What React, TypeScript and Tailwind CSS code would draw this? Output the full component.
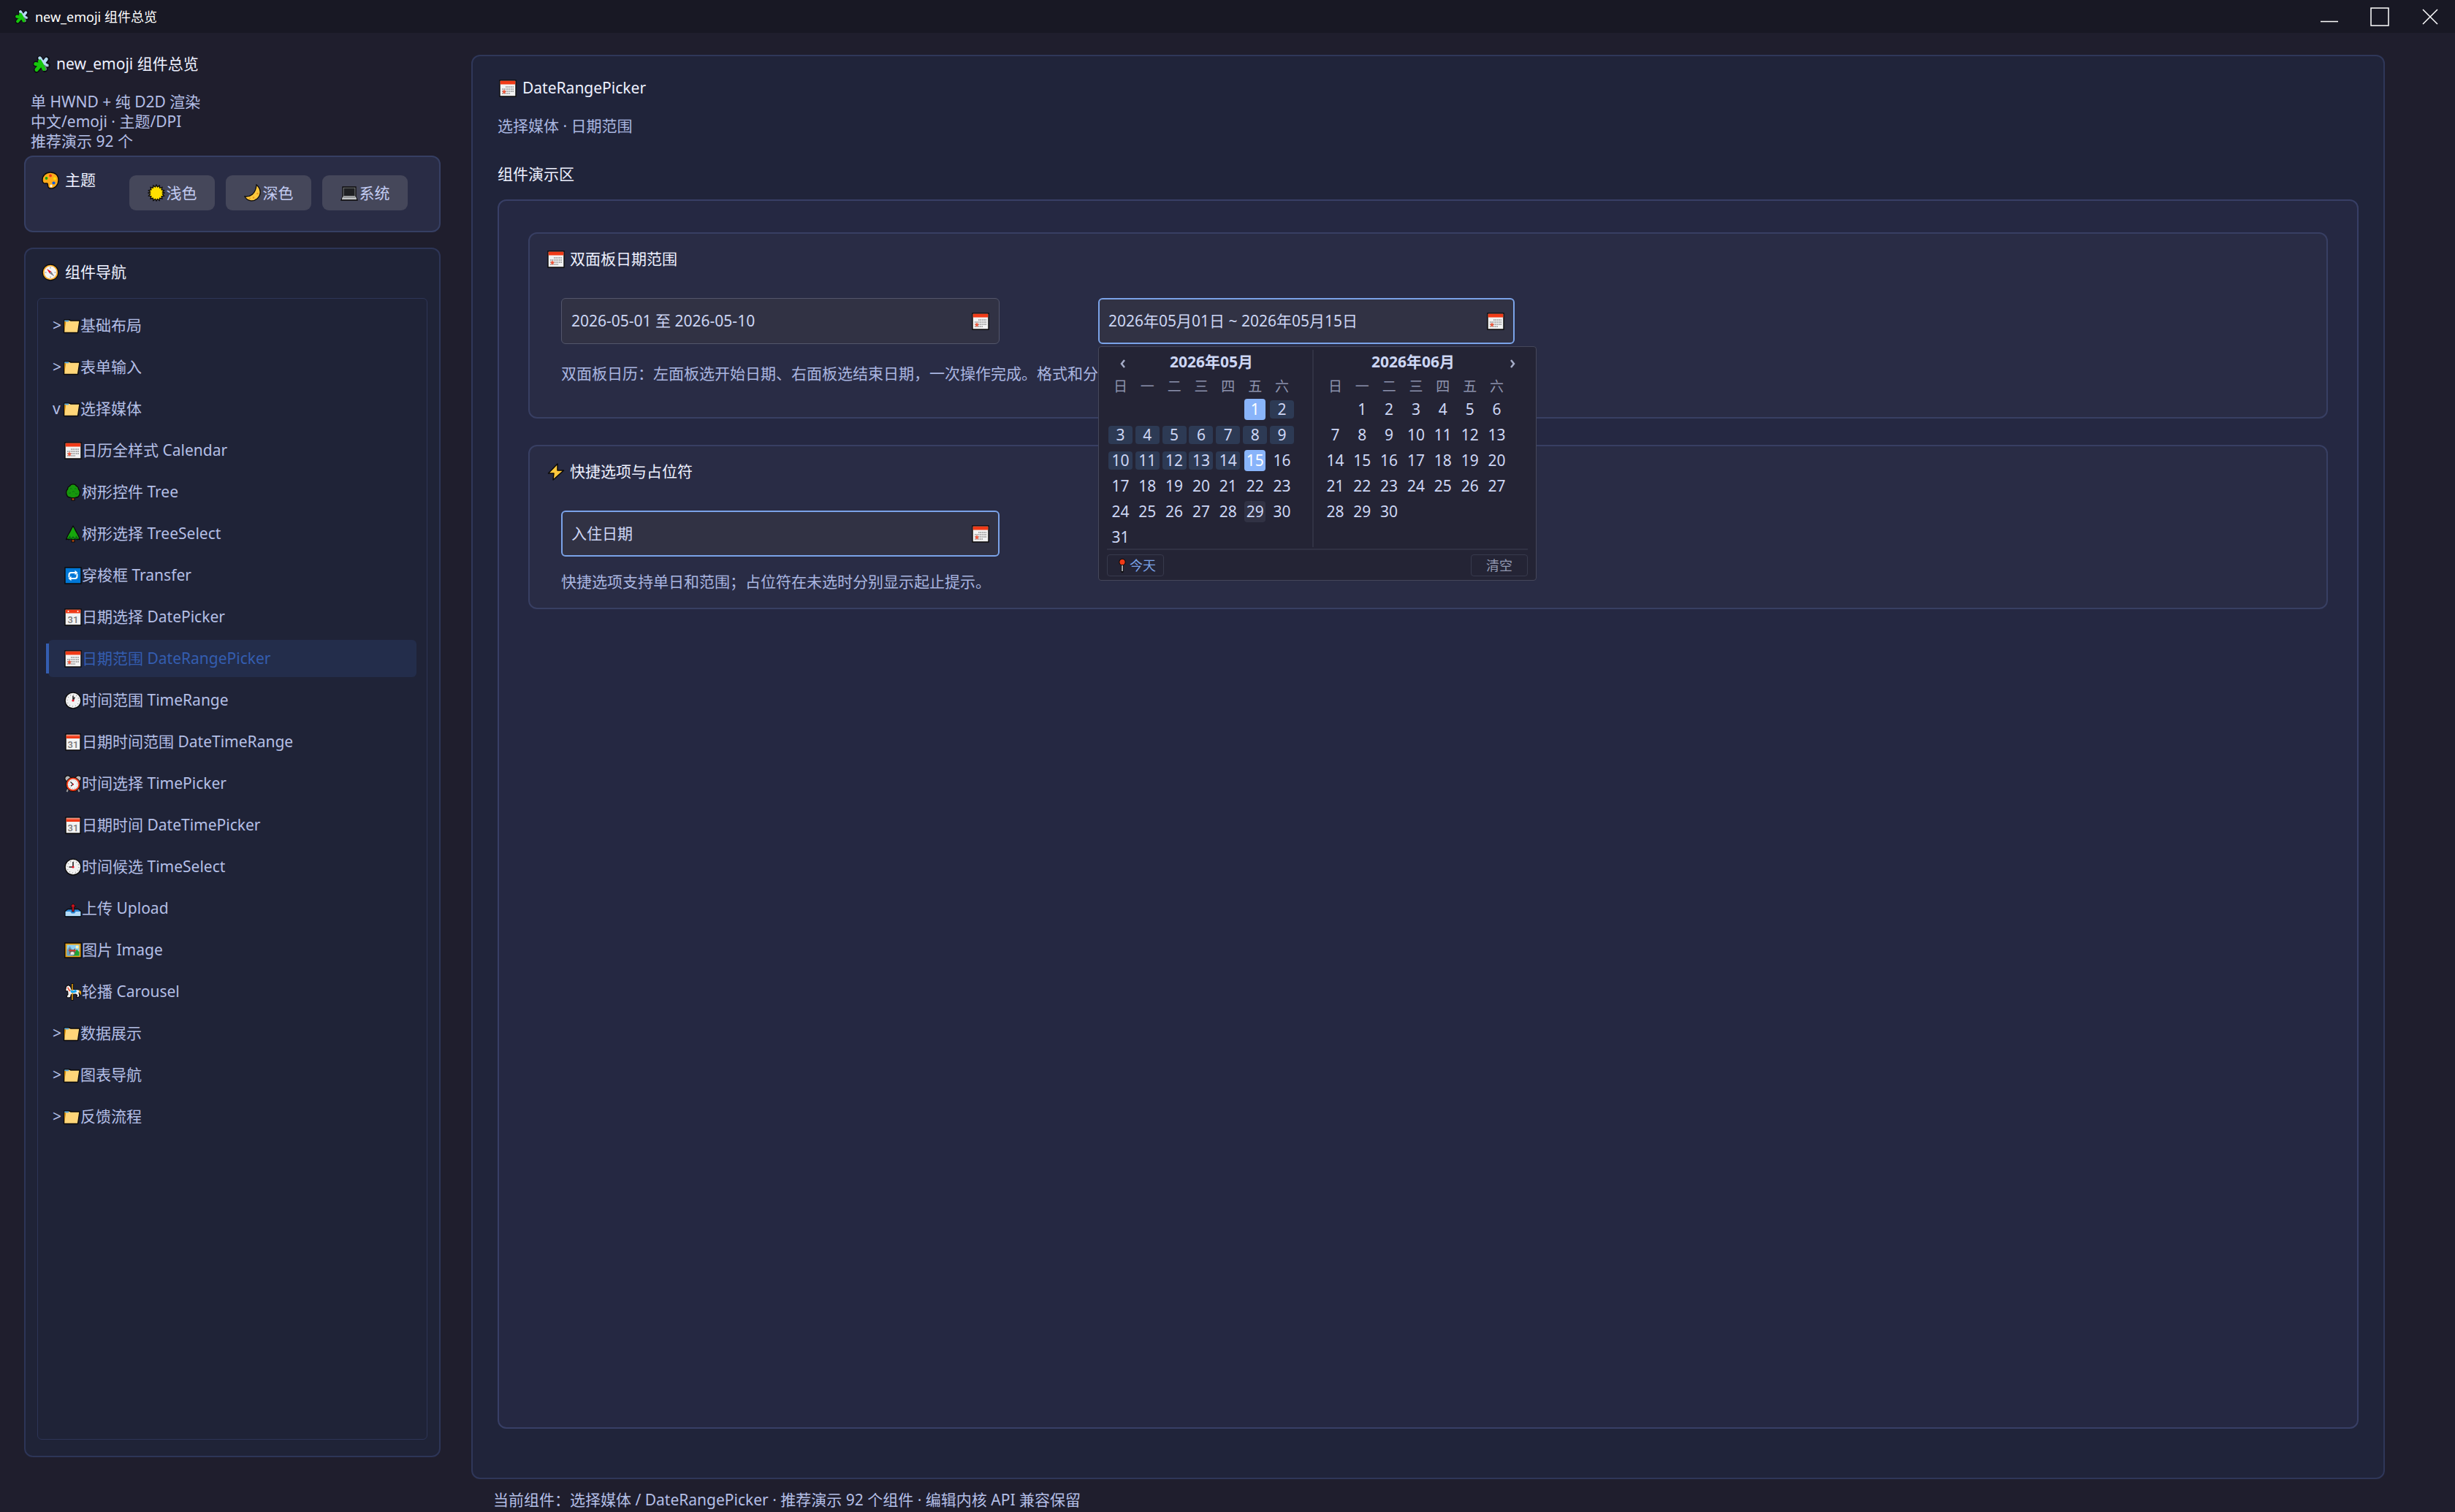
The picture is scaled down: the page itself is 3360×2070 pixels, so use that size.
import { ReactNode } from "react";
import clsx from "clsx";

function Svg({ children, className = "size-6" }: { children: ReactNode; className?: string }) {
  return (
    <svg viewBox="0 0 24 24" className={clsx("shrink-0", className)} aria-hidden="true">
      {children}
    </svg>
  );
}

const PuzzleIcon = ({ className }: { className?: string }) => (
  <Svg className={className}>
    <path d="M5 20L19 5M9.500 4l3 8 4 7M4 11.500l9 1.500 7 .5" fill="none" stroke="#0a0c10" strokeWidth="7.500" strokeLinecap="round" strokeLinejoin="round" />
    <path d="M10 4l3 8 4 6.500M20 13.500l-5-1" fill="none" stroke="#66757f" strokeWidth="4.500" strokeLinecap="round" />
    <path d="M18.500 5L13 12M9.500 3.500l2.500 4" fill="none" stroke="#b4d9f2" strokeWidth="4.500" strokeLinecap="round" />
    <path d="M19.500 13.500l-4-3" fill="none" stroke="#b4d9f2" strokeWidth="3" strokeLinecap="round" />
    <path d="M5 19.500l6-7M9.500 8l3 5 2.500 5.500M3.800 11.500l8 1.500" fill="none" stroke="#16c60c" strokeWidth="5" strokeLinecap="round" strokeLinejoin="round" />
  </Svg>
);

const PaletteIcon = () => (
  <Svg>
    <path d="M12 1C5.500 1 1 5.600 1 11.500c0 3.500 2 5 4.500 4.500 2-.4 3 0 3 2.500 0 2.700 1.500 4.500 4 4.500C18.500 23 23 18 23 11.500S18.500 1 12 1z" fill="#ffab1a" stroke="#0b0a0a" strokeWidth="1.400" />
    <circle cx="12" cy="5.500" r="1.900" fill="#f03a17" />
    <circle cx="6.500" cy="9" r="1.900" fill="#16a60c" />
    <circle cx="18" cy="9.500" r="1.900" fill="#ffe000" />
    <circle cx="16.500" cy="15.500" r="2.100" fill="#0f5be0" />
    <ellipse cx="13" cy="19.500" rx="1.600" ry="2" fill="#f2f2f2" />
  </Svg>
);

const SunIcon = () => (
  <Svg>
    <path
      d="M12 1l1.500 3 2.700-2 .4 3.300 3.300-.8-.8 3.300 3.400.8-2.200 2.400L23 12l-2.700 1.500 2.200 2.700-3.400.5.800 3.300-3.300-.8-.4 3.300-2.700-2L12 23l-1.500-2.500-2.700 2-.4-3.300-3.300.8.8-3.300-3.400-.5 2.200-2.700L1 12l2.700-1-2.200-2.400 3.400-.8-.8-3.300 3.300.8.4-3.300 2.700 2z"
      fill="#ffe000" stroke="#0b0a0a" strokeWidth="1.300"
    />
  </Svg>
);

const MoonIcon = () => (
  <Svg>
    <path d="M17 1c7 6 6.500 14 1 19C12 25 4 23 1 17c7 1 15-3 16-16z" fill="#ffc83d" stroke="#0b0a0a" strokeWidth="1.300" />
    <circle cx="18.500" cy="13" r="1.300" fill="#e89b1c" />
    <circle cx="13" cy="18.500" r="1.300" fill="#e89b1c" />
    <circle cx="8" cy="19.500" r="1" fill="#e89b1c" />
  </Svg>
);

const LaptopIcon = () => (
  <Svg>
    <path d="M3 4h18v13l2 5H1l2-5z" fill="#8b8d8f" stroke="#0b0a0a" strokeWidth="1.300" />
    <path d="M4.500 5.500h15v10.500h-15z" fill="#1f2023" />
    <path d="M3 17.500h18l1.200 3.500H1.800z" fill="#c3c5c8" />
    <path d="M4 18h16v1H4z" fill="#8b8d8f" />
  </Svg>
);

const CompassIcon = () => (
  <Svg>
    <circle cx="12" cy="12" r="10.800" fill="#ffb02e" stroke="#0b0a0a" strokeWidth="1.200" />
    <circle cx="12" cy="12" r="8.400" fill="#f4f4f4" />
    <path d="M12 4.500v2M12 17.500v2M4.500 12h2M17.500 12h2" stroke="#8c8c8c" strokeWidth="1" />
    <path d="M7 7l6.200 3.800-2.400 2.400z" fill="#e81224" />
    <path d="M17.500 17.500l-6.700-4.300 2.400-2.400z" fill="#7b7f86" />
  </Svg>
);

const FolderIcon = () => (
  <Svg>
    <path d="M2 4h7l2 1h12l-2.500 16.500H1.500z" fill="#ffd679" stroke="#0b0a0a" strokeWidth="1.400" strokeLinejoin="round" />
    <path d="M2.300 4.500H8v1.800H2.300z" fill="#4ba3e3" />
    <path d="M2.300 6.300h2L2.200 20z" fill="#d98a00" />
  </Svg>
);

const CalendarIcon = () => (
  <Svg>
    <path d="M1 1h22v22H1z" fill="#f2f2f2" stroke="#0b0a0a" strokeWidth="1.400" />
    <path d="M1.700 1.700h20.600v4.800H1.700z" fill="#f03a17" />
    <path d="M9 10h11M4 13h16M4 16h16M4 19h11" stroke="#a6a6a6" strokeWidth="2" strokeDasharray="1.600 .8" />
    <path d="M7 13.500l1 1.800 2 .5-1.500 1.300.2 2.100L7 18.400l-1.700.8.2-2.100L4 15.800l2-.5z" fill="#f0563a" />
  </Svg>
);

const TearOffIcon = () => (
  <Svg>
    <path d="M1 1h22v22H1z" fill="#f2f2f2" stroke="#0b0a0a" strokeWidth="1.400" />
    <path d="M1.700 1.700h20.600v4.800H1.700z" fill="#f03a17" />
    <circle cx="5.500" cy="4" r="1" fill="#fff" />
    <circle cx="18.500" cy="4" r="1" fill="#fff" />
    <text x="12" y="19.500" textAnchor="middle" fontSize="13" fontFamily="Roboto, sans-serif" fontWeight="500" fill="#777">31</text>
  </Svg>
);

const SpiralIcon = () => (
  <Svg>
    <path d="M2 1h20v22H2z" fill="#f2f2f2" stroke="#0b0a0a" strokeWidth="1.400" />
    <path d="M2.700 2h18.600v5H2.700z" fill="#f03a17" />
    <path d="M3.500 2.800h17.500" stroke="#f8d5cc" strokeWidth="2" strokeDasharray="1 1" />
    <text x="12" y="19.500" textAnchor="middle" fontSize="13" fontFamily="Roboto, sans-serif" fontWeight="500" fill="#777">31</text>
  </Svg>
);

const TreeIcon = () => (
  <Svg>
    <path d="M10 17h4v6h-4z" fill="#c9500f" stroke="#0b0a0a" strokeWidth="1.200" />
    <path d="M12 .8c2.200 0 3.800 1 4.500 2.700 2 .7 3 2.300 3 4.300 1.600 1.600 2.200 4.200 1.500 6.700-.8 3-2.700 4.700-5.200 4.500-2 .8-5.600.8-7.600 0-2.500.2-4.400-1.500-5.200-4.500-.7-2.500-.1-5.100 1.500-6.700 0-2 1-3.600 3-4.300C8.200 1.800 9.800.8 12 .8z" fill="#16960c" stroke="#0b0a0a" strokeWidth="1.300" />
    <path d="M8 7.500q1.500-2 2.500 0M14 7.500q1.500-2 2.500 0M6 12.500q1.500 2 3 0M11 11.500q1.500-2 3 0M15 13.500q1.500 2 3 0" fill="none" stroke="#0b6a12" />
  </Svg>
);

const PineIcon = () => (
  <Svg>
    <path d="M10 18h4v5h-4z" fill="#c9500f" stroke="#0b0a0a" strokeWidth="1.200" />
    <path d="M12 1C9.500 5 8 9 6 12l-1.500 3-2 4.500 3-.5.5 1 3-1.500 3 1.500 3-1.500 3 1.500.5-1 3 .5-2-4.500-1.500-3C16 9 14.500 5 12 1z" fill="#16a60c" stroke="#0b0a0a" strokeWidth="1.300" strokeLinejoin="round" />
    <path d="M5 18l3-4 1 4 3-3 3 3 1-4 3 4-3 1-4-1-4 1z" fill="#0b6a12" />
  </Svg>
);

const RepeatIcon = () => (
  <Svg>
    <path d="M1 1h22v22H1z" fill="#0078d7" stroke="#0b0a0a" strokeWidth="1.400" />
    <path d="M6.500 14.500V11q0-3 3-3h6M17.500 9.500V13q0 3-3 3h-6" fill="none" stroke="#fff" strokeWidth="2" />
    <path d="M14.500 4.800L18.500 8l-4 3.200zM9.500 12.800L5.500 16l4 3.200z" fill="#fff" />
  </Svg>
);

function ClockIcon({ hour }: { hour: 1 | 9 }) {
  return (
    <Svg>
      <circle cx="12" cy="12" r="10.900" fill="#f2f2f2" stroke="#0b0a0a" strokeWidth="1.400" />
      <circle cx="12" cy="12" r="8" fill="none" stroke="#8a8a8a" strokeWidth="1.200" strokeDasharray="1 3.190" />
      <path d={hour === 1 ? "M12 12V5.500M12 12l2.300-4.500" : "M12 12V5M12 12H6.500"} stroke="#222" strokeWidth="1.600" />
      <circle cx="12" cy="12" r="1.600" fill="#e81224" />
    </Svg>
  );
}

const AlarmIcon = () => (
  <Svg>
    <path d="M5.500 18.500l-2 4.500M18.500 18.500l2 4.500" stroke="#9b9b9b" strokeWidth="2" />
    <circle cx="4.800" cy="4.800" r="4" fill="#b5b7ba" stroke="#0b0a0a" strokeWidth="1.200" />
    <circle cx="19.200" cy="4.800" r="4" fill="#b5b7ba" stroke="#0b0a0a" strokeWidth="1.200" />
    <circle cx="12" cy="12.800" r="9.700" fill="#f03a17" stroke="#0b0a0a" strokeWidth="1" />
    <circle cx="12" cy="12.800" r="7.300" fill="#f4f4f4" />
    <circle cx="12" cy="12.800" r="5.800" fill="none" stroke="#9a9a9a" strokeDasharray="1 2.037" />
    <path d="M8.500 9.500l3.500 3.300-3 2.400" fill="none" stroke="#222" strokeWidth="1.300" />
    <circle cx="12" cy="12.800" r="1" fill="#e81224" />
  </Svg>
);

const OutboxIcon = () => (
  <Svg>
    <path d="M5 12.500h14l4 3V22q0 1-1 1H2q-1 0-1-1v-6.500z" fill="#2b88d8" stroke="#0b0a0a" strokeWidth="1.300" />
    <path d="M1.700 16h6.500l1.800 2.500h4l1.800-2.500h6.500v6H1.700z" fill="#b4dcf7" />
    <path d="M12 5l3.800 4.500h-2.500V16h-2.600V9.500H8.200z" fill="#d3121f" stroke="#0b0a0a" strokeWidth=".8" />
  </Svg>
);

const PictureIcon = () => (
  <Svg>
    <path d="M.8 2h22.400v20H.8z" fill="#e8a010" stroke="#0b0a0a" strokeWidth="1.400" />
    <path d="M3.500 4.500h17v15h-17z" fill="#8fd0f5" />
    <path d="M3.500 12l4-6 5 8v5.500h-9z" fill="#6a9fc4" />
    <circle cx="17.500" cy="7.500" r="2" fill="#fff3b0" />
    <path d="M12 19.500l5-9 3.500 4v5z" fill="#1da432" />
    <path d="M7 9l2 2h4l2-2v7.500q-4 4-8 0z" fill="#6d6257" />
    <path d="M8.500 15q2.500-2 5 0v3h-5z" fill="#e9e6e2" />
    <path d="M6 11.500h10v1.700H6z" fill="#d83b2d" />
  </Svg>
);

const CarouselIcon = () => (
  <Svg>
    <path d="M11 0v24" stroke="#0b0a0a" strokeWidth="3" />
    <path d="M2.500 4.500l3-2 3 2 1.500 4h6l4 .5 2 3-.5 2-1.500-1 1 4-1.500 2.500h-2.500l.5-3-2-1.500-6 .5-1 4-4 .5-1.500-2 2-2.500L4.500 11l-3-.5z" fill="#f1f1f1" stroke="#0b0a0a" strokeWidth="1.200" strokeLinejoin="round" />
    <path d="M11 1v22" stroke="#e8a010" strokeWidth="1.500" />
    <path d="M8 9q4 2.500 8-.5l1 3.500q-4.500 2.500-8 .5z" fill="#1aa7ec" />
    <path d="M5 5l3.500 5.500-1.500 1-3-5z" fill="#f0563a" />
    <path d="M20 9l3 2.500-.3 5-2-3z" fill="#e8a010" />
  </Svg>
);

const BoltIcon = () => (
  <Svg>
    <path d="M14 1L1.500 14H9L8 23l14.500-13H14z" fill="#ffc83d" stroke="#0b0a0a" strokeWidth="1.500" strokeLinejoin="round" />
  </Svg>
);

const PinIcon = () => (
  <Svg className="size-5">
    <path d="M12 9v13" stroke="#0b0a0a" strokeWidth="4" strokeLinecap="round" />
    <path d="M12 9v12.500" stroke="#d5d7da" strokeWidth="1.800" />
    <circle cx="12" cy="6.500" r="5" fill="#f03a17" stroke="#0b0a0a" strokeWidth="1.300" />
  </Svg>
);

const Chevron = ({ d }: { d: string }) => (
  <svg viewBox="0 0 12 18" className="h-[18px] w-3" aria-hidden="true">
    <path d={d} fill="none" stroke="currentColor" strokeWidth="2.500" />
  </svg>
);

const groupsBefore = ["基础布局", "表单输入"];
const groupsAfter = ["数据展示", "图表导航", "反馈流程"];

const mediaItems: { label: string; icon: ReactNode; active?: boolean }[] = [
  { label: "日历全样式 Calendar", icon: <CalendarIcon /> },
  { label: "树形控件 Tree", icon: <TreeIcon /> },
  { label: "树形选择 TreeSelect", icon: <PineIcon /> },
  { label: "穿梭框 Transfer", icon: <RepeatIcon /> },
  { label: "日期选择 DatePicker", icon: <TearOffIcon /> },
  { label: "日期范围 DateRangePicker", icon: <CalendarIcon />, active: true },
  { label: "时间范围 TimeRange", icon: <ClockIcon hour={1} /> },
  { label: "日期时间范围 DateTimeRange", icon: <SpiralIcon /> },
  { label: "时间选择 TimePicker", icon: <AlarmIcon /> },
  { label: "日期时间 DateTimePicker", icon: <SpiralIcon /> },
  { label: "时间候选 TimeSelect", icon: <ClockIcon hour={9} /> },
  { label: "上传 Upload", icon: <OutboxIcon /> },
  { label: "图片 Image", icon: <PictureIcon /> },
  { label: "轮播 Carousel", icon: <CarouselIcon /> },
];

const themes = [
  { label: "浅色", icon: <SunIcon /> },
  { label: "深色", icon: <MoonIcon /> },
  { label: "系统", icon: <LaptopIcon /> },
];

const weekdays = ["日", "一", "二", "三", "四", "五", "六"];

function TitleBar() {
  return (
    <header className="flex h-[45px] items-center bg-[#181824] pl-5 text-white">
      <PuzzleIcon className="size-5" />
      <span className="ml-2 flex-1 text-[18px] leading-6">new_emoji 组件总览</span>
      <button aria-label="最小化" className="flex h-full w-[69px] items-center justify-center">
        <svg viewBox="0 0 26 26" className="size-[26px]"><path d="M1 19.500h24" stroke="#fff" strokeWidth="1.500" /></svg>
      </button>
      <button aria-label="最大化" className="flex h-full w-[69px] items-center justify-center">
        <svg viewBox="0 0 26 26" className="size-[26px]"><path d="M1 1h24v24H1z" fill="none" stroke="#fff" strokeWidth="1.500" /></svg>
      </button>
      <button aria-label="关闭" className="flex h-full w-[69px] items-center justify-center">
        <svg viewBox="0 0 26 26" className="size-[26px]"><path d="M3 3l20 20M23 3L3 23" stroke="#fff" strokeWidth="1.500" /></svg>
      </button>
    </header>
  );
}

function TreeGroup({ label, open = false }: { label: string; open?: boolean }) {
  return (
    <button aria-expanded={open} className="flex h-[51px] w-full items-center pl-[6px] text-left">
      <span className="w-[14px]">{open ? "v" : ">"}</span>
      <FolderIcon />
      <span>{label}</span>
    </button>
  );
}

function TreeItem({ label, icon, active }: { label: string; icon: ReactNode; active?: boolean }) {
  return (
    <a
      href="#"
      className={clsx("relative flex h-[51px] items-center rounded-md pl-[22px]", active && "bg-[#232d4b] text-[#345db0]")}
    >
      {active && <span className="absolute top-[5px] -left-[3px] h-[41px] w-1 bg-[#345db0]" />}
      {icon}
      <span>{label}</span>
    </a>
  );
}

function Sidebar() {
  return (
    <aside className="flex w-[570px] shrink-0 flex-col pb-[75px]">
      <div className="flex items-center gap-2 pt-[29px] pl-3 text-[#eef1ff]">
        <PuzzleIcon className="size-6" />
        <h1>new_emoji 组件总览</h1>
      </div>
      <p className="mt-[25px] pl-[9px] text-[#b4bfe6]">
        单 HWND + 纯 D2D 渲染<br />
        中文/emoji · 主题/DPI<br />
        推荐演示 92 个
      </p>

      <section className="mt-[6px] flex h-[105px] items-start rounded-xl border-2 border-[#363f63] bg-[#292c45] pl-[22px]">
        <div className="flex w-[120px] items-center gap-2 pt-[18px] text-[#eef1ff]">
          <PaletteIcon />
          <h2>主题</h2>
        </div>
        <div className="flex gap-[15px] pt-[25px] text-[#c3ccf2]">
          {themes.map((t) => (
            <button key={t.label} className="flex h-12 w-[117px] items-center justify-center gap-[2px] rounded-[9px] bg-[#45475a]">
              {t.icon}
              {t.label}
            </button>
          ))}
        </div>
      </section>

      <section className="mt-[21px] flex flex-1 flex-col rounded-xl border-2 border-[#2d3557] bg-[#1f2337] px-4 pb-[22px]">
        <div className="flex items-center gap-2 pt-[18px] pl-[6px] text-[#eef1ff]">
          <CompassIcon />
          <h2>组件导航</h2>
        </div>
        <nav className="mt-[22px] flex flex-1 flex-col gap-[6px] rounded-md border border-[#2d3557] px-[14px] pt-[11px] pb-3 text-[#b4bfe6]">
          {groupsBefore.map((g) => <TreeGroup key={g} label={g} />)}
          <TreeGroup label="选择媒体" open />
          {mediaItems.map((m) => <TreeItem key={m.label} {...m} />)}
          {groupsAfter.map((g) => <TreeGroup key={g} label={g} />)}
        </nav>
      </section>
    </aside>
  );
}

function DateField({ label, value, placeholder, focused }: { label: string; value?: string; placeholder?: string; focused?: boolean }) {
  return (
    <div
      className={clsx(
        "flex h-[63px] items-center rounded-md bg-[#313244]",
        focused ? "border-2 border-[#7ba3e8] px-3" : "border border-[#53566b] px-[13px]"
      )}
    >
      <input
        aria-label={label}
        readOnly
        value={value ?? ""}
        placeholder={placeholder}
        className="min-w-0 flex-1 bg-transparent text-[#cdd6f4] outline-none placeholder:text-[#cdd6f4]"
      />
      <button aria-label="打开日历"><CalendarIcon /></button>
    </div>
  );
}

interface MonthProps {
  title: string;
  titleClass: string;
  offset: number;
  days: number;
  range?: [number, number];
  today?: number;
}

function Month({ title, titleClass, offset, days, range, today }: MonthProps) {
  const cells = Array.from({ length: days }, (_, i) => i + 1);
  return (
    <div className="w-[258px]">
      <div className={clsx("flex h-10 items-center justify-center font-bold text-[#cdd6f4]", titleClass)}>{title}</div>
      <div className="grid grid-cols-7 pt-px">
        {weekdays.map((d) => (
          <span key={d} className="text-center text-[19px] text-[#8d93ad]">{d}</span>
        ))}
      </div>
      <div className="grid grid-cols-7 text-[#cdd6f4]">
        {Array.from({ length: offset }, (_, i) => <span key={`pad-${i}`} />)}
        {cells.map((d) => {
          const edge = range && (d === range[0] || d === range[1]);
          const inside = range && d > range[0] && d < range[1];
          return (
            <button key={d} className="flex h-[35px] items-center justify-center">
              <span
                className={clsx(
                  "flex items-center justify-center rounded-[4px]",
                  edge ? "h-[29px] w-[29px] bg-[#89b4fa] text-white" : inside ? "h-[25px] w-[33px] bg-[#2d3a54]" : "h-[29px] w-[29px]",
                  d === today && "bg-[#313244]"
                )}
              >
                {d}
              </span>
            </button>
          );
        })}
      </div>
    </div>
  );
}

function RangePopup() {
  return (
    <div role="dialog" aria-label="日期范围" className="absolute top-[66px] left-0 z-10 rounded-[4px] border border-[#45475a] bg-[#242435] px-[11px] pb-[5px]">
      <div className="flex h-[278px] w-[576px] border-b-2 border-[#313244]">
        <Month title="2026年05月" titleClass="pl-7" offset={5} days={31} range={[1, 15]} today={29} />
        <div className="mt-1 mr-[11px] ml-[23px] h-[270px] w-[2px] bg-[#313244]" />
        <Month title="2026年06月" titleClass="pr-2" offset={1} days={30} />
      </div>
      <button aria-label="上个月" className="absolute top-[14px] left-[27px] text-[#a6adc8]"><Chevron d="M8 4L4 9l4 5" /></button>
      <button aria-label="下个月" className="absolute top-[14px] right-[26px] text-[#a6adc8]"><Chevron d="M4 4l4 5-4 5" /></button>
      <div className="flex justify-between pt-[6px] text-[18px]">
        <button className="flex h-[30px] w-[78px] items-center justify-center rounded-[4px] border border-[#383a4d] text-[#7ba3e8]">
          <PinIcon />
          今天
        </button>
        <button className="h-[30px] w-[78px] rounded-[4px] border border-[#383a4d] text-[#9399b2]">清空</button>
      </div>
    </div>
  );
}

function DemoCard({ title, icon, children, className }: { title: string; icon: ReactNode; children: ReactNode; className?: string }) {
  return (
    <section className={clsx("rounded-xl border-2 border-[#383f63] bg-[#292c45] pl-6", className)}>
      <div className="flex items-center gap-[7px] pt-[21px] text-[#eef1ff]">
        {icon}
        <h3>{title}</h3>
      </div>
      <div className="pt-10 pl-[19px]">{children}</div>
    </section>
  );
}

export default function App() {
  return (
    <div
      lang="zh-CN"
      className="flex min-h-screen flex-col bg-[#1f1e2d] font-['Noto_Sans','Noto_Sans_CJK_SC',sans-serif] text-[21px] leading-[27px]"
    >
      <TitleBar />
      <div className="flex flex-1 gap-[42px] pr-24 pl-[33px]">
        <Sidebar />
        <div className="flex min-w-0 flex-1 flex-col pt-[30px]">
          <main className="flex flex-1 flex-col rounded-xl border-2 border-[#2f3759] bg-[#20243a] px-[34px] pb-[67px]">
            <div className="flex items-center gap-2 pt-[30px] pl-[2px] text-[#eef1ff]">
              <CalendarIcon />
              <h2>DateRangePicker</h2>
            </div>
            <p className="mt-[25px] text-[#aab6e0]">选择媒体 · 日期范围</p>
            <h3 className="mt-[39px] text-[#eef1ff]">组件演示区</h3>
            <div className="mt-[21px] flex flex-1 flex-col gap-9 rounded-xl border-2 border-[#383f66] bg-[#252842] px-10 pt-[43px]">
              <DemoCard title="双面板日期范围" icon={<CalendarIcon />} className="h-[255px]">
                <div className="flex gap-[135px]">
                  <div className="w-[600px]">
                    <DateField label="日期范围" value="2026-05-01 至 2026-05-10" />
                  </div>
                  <div className="relative w-[570px]">
                    <DateField label="自定义格式日期范围" value="2026年05月01日 ~ 2026年05月15日" focused />
                    <RangePopup />
                  </div>
                </div>
                <p className="mt-[27px] text-[#aab6e0]">双面板日历：左面板选开始日期、右面板选结束日期，一次操作完成。格式和分</p>
              </DemoCard>
              <DemoCard title="快捷选项与占位符" icon={<BoltIcon />} className="h-[225px]">
                <div className="w-[600px]">
                  <DateField label="入住日期" placeholder="入住日期" focused />
                </div>
                <p className="mt-[21px] text-[#aab6e0]">快捷选项支持单日和范围；占位符在未选时分别显示起止提示。</p>
              </DemoCard>
            </div>
          </main>
          <footer className="flex h-[45px] items-end pb-[3px] pl-[30px] text-[#b4bfe6]">
            当前组件：选择媒体 / DateRangePicker · 推荐演示 92 个组件 · 编辑内核 API 兼容保留
          </footer>
        </div>
      </div>
    </div>
  );
}
